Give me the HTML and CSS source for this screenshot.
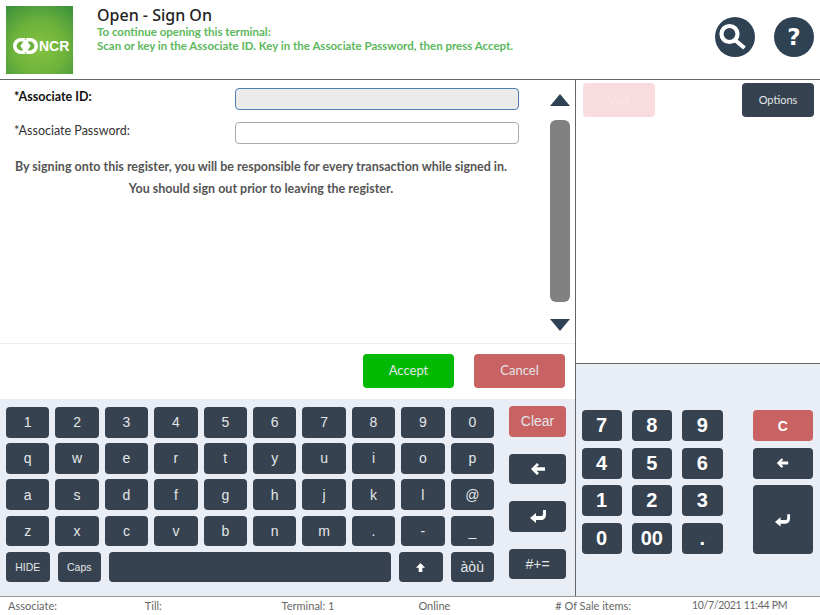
FILE: index.html
```html
<!DOCTYPE html>
<html lang="en">
  <head>
    <meta charset="UTF-8" />
    <title>Open - Sign On</title>
    <link rel="stylesheet" href="styles.css">
  </head>
  <body>
    <header class="top-bar">
      <div class="logo">
        <svg class="logo-mark" viewBox="0 0 25 16" width="25" height="16">
          <rect width="25" height="16" rx="8" fill="#fff" />
          <path d="M10.4 3.6 H8 A4.4 4.4 0 0 0 8 12.4 H10.4 L7.4 8 Z" fill="#6cb23c" />
          <path d="M14.6 3.6 H17 A4.4 4.4 0 0 1 17 12.4 H14.6 L17.6 8 Z" fill="#6cb23c" />
          <path d="M12.5 0 L13.6 1.6 L11.4 1.6 Z M12.5 16 L13.6 14.4 L11.4 14.4 Z" fill="#6cb23c" />
        </svg>
        <span>NCR</span>
      </div>
      <div class="heading">
        <h1>Open - Sign On</h1>
        <p>To continue opening this terminal:</p>
        <p>Scan or key in the Associate ID. Key in the Associate Password, then press Accept.</p>
      </div>
      <div class="round-button">
        <svg viewBox="0 0 40 40" width="40" height="40">
          <circle cx="14.5" cy="17" r="8" fill="none" stroke="#fff" stroke-width="4.2" />
          <path d="M20.5 23.5 L29.5 31" stroke="#fff" stroke-width="4.2" />
        </svg>
      </div>
      <div class="round-button help">?</div>
    </header>

    <div class="middle">
      <main class="left-side">
        <section class="form-pane">
          <form class="sign-on">
            <div class="field">
              <label class="strong">*Associate ID:</label>
              <input class="input-active" type="text" />
            </div>
            <div class="field">
              <label>*Associate Password:</label>
              <input type="text" />
            </div>
            <p class="notice">By signing onto this register, you will be responsible for every transaction while signed in.</p>
            <p class="notice">You should sign out prior to leaving the register.</p>
          </form>
          <div class="scroller">
            <div class="arrow-up"></div>
            <div class="thumb"></div>
            <div class="arrow-down"></div>
          </div>
        </section>

        <div class="actions">
          <button class="btn-accept">Accept</button>
          <button class="btn-cancel">Cancel</button>
        </div>

        <section class="keyboard">
          <div class="keys">
            <button>1</button><button>2</button><button>3</button><button>4</button><button>5</button>
            <button>6</button><button>7</button><button>8</button><button>9</button><button>0</button>
            <button>q</button><button>w</button><button>e</button><button>r</button><button>t</button>
            <button>y</button><button>u</button><button>i</button><button>o</button><button>p</button>
            <button>a</button><button>s</button><button>d</button><button>f</button><button>g</button>
            <button>h</button><button>j</button><button>k</button><button>l</button><button>@</button>
            <button>z</button><button>x</button><button>c</button><button>v</button><button>b</button>
            <button>n</button><button>m</button><button>.</button><button>-</button><button>_</button>
            <div class="bottom-row">
              <button class="small-key">HIDE</button>
              <button class="small-key">Caps</button>
              <button class="space-key"></button>
              <button class="small-key">
                <svg viewBox="0 0 12 12" width="11" height="11"><path d="M6 1 L11 6.2 H8 V11 H4 V6.2 H1 Z" fill="#fff" /></svg>
              </button>
              <button class="small-key accents">àòù</button>
            </div>
          </div>
          <div class="key-side">
            <button class="key-clear">Clear</button>
            <button>
              <svg viewBox="0 0 16 14" width="16" height="14"><path d="M7 1 L1 7 L7 13 L9 11 L6.4 8.8 H15 V5.2 H6.4 L9 3 Z" fill="#fff" /></svg>
            </button>
            <button>
              <svg viewBox="0 0 18 14" width="18" height="14"><path d="M1 9 L7 4 V7 H12.5 C13.5 7 14 6 14 4 V1 L17 1 V5 C17 9 15 11 12 11 H7 V14 Z" fill="#fff" /></svg>
            </button>
            <button>#+=</button>
          </div>
        </section>
      </main>

      <aside class="right-side">
        <div class="right-top">
          <button class="btn-disabled">Void</button>
          <button class="btn-options">Options</button>
        </div>
        <div class="numpad">
          <button>7</button><button>8</button><button>9</button>
          <button class="pad-c">C</button>
          <button>4</button><button>5</button><button>6</button>
          <button class="pad-side">
            <svg viewBox="0 0 16 14" width="13" height="12"><path d="M7 1 L1 7 L7 13 L9 11 L6.4 8.8 H15 V5.2 H6.4 L9 3 Z" fill="#fff" /></svg>
          </button>
          <button>1</button><button>2</button><button>3</button>
          <button class="pad-enter">
            <svg viewBox="0 0 18 14" width="17" height="14"><path d="M1 9 L7 4 V7 H12.5 C13.5 7 14 6 14 4 V1 L17 1 V5 C17 9 15 11 12 11 H7 V14 Z" fill="#fff" /></svg>
          </button>
          <button>0</button><button>00</button><button>.</button>
        </div>
      </aside>
    </div>

    <footer class="status-bar">
      <span>Associate:</span>
      <span>Till:</span>
      <span>Terminal: 1</span>
      <span>Online</span>
      <span># Of Sale items:</span>
      <span class="status-date">10/7/2021 11:44 PM</span>
    </footer>
  </body>
</html>
```

FILE: styles.css
```css
* {
  margin: 0;
  padding: 0;
  box-sizing: border-box;
}

body {
  width: 820px;
  height: 615px;
  overflow: hidden;
  display: flex;
  flex-direction: column;
  background-color: #fff;
  color: #555;
  font-family: Lato, sans-serif;
}

button {
  border: none;
  border-radius: 4px;
  background-color: #36424f;
  color: #e3e6e9;
  font-family: "Liberation Sans", sans-serif;
  display: flex;
  align-items: center;
  justify-content: center;
}

/* header */
.top-bar {
  height: 80px;
  flex: none;
  display: flex;
  align-items: flex-start;
  padding: 6px 6px 0;
  border-bottom: 1px solid #666;
}

.logo {
  width: 67px;
  height: 68px;
  flex: none;
  display: flex;
  align-items: center;
  justify-content: flex-start;
  gap: 1px;
  padding: 11px 0 0 7px;
  background: radial-gradient(circle at 50% 62%, #86c340 0%, #6cb23c 50%, #3a8f3c 100%);
  color: #fff;
  font-family: "Liberation Sans", sans-serif;
  font-size: 14px;
  font-weight: bold;
}

.heading {
  margin-left: 24px;
  flex: 1;
  color: #5cb85c;
  font-size: 11.5px;
  line-height: 14px;
  font-weight: 700;
}

.heading h1 {
  color: #222;
  font-family: "Noto Sans", sans-serif;
  font-size: 16px;
  line-height: 20px;
  font-weight: 500;
  margin-top: -1px;
}

.round-button {
  width: 40px;
  height: 40px;
  margin: 11px 0 0 19px;
  border-radius: 50%;
  background-color: #2f4254;
  color: #fff;
  display: flex;
  align-items: center;
  justify-content: center;
}

.help {
  font-family: "DejaVu Sans", sans-serif;
  font-size: 23px;
  font-weight: bold;
}

.middle {
  flex: 1;
  display: flex;
  min-height: 0;
}

/* left side */
.left-side {
  width: 576px;
  flex: none;
  display: flex;
  flex-direction: column;
  border-right: 1px solid #666;
}

.form-pane {
  height: 264px;
  flex: none;
  display: flex;
  border-bottom: 1px solid #eee;
}

.sign-on {
  width: 522px;
  flex: none;
  padding-top: 8px;
  font-size: 12.5px;
}

.field {
  display: flex;
  padding-left: 14px;
  margin-bottom: 12px;
}

.field label {
  width: 221px;
  flex: none;
  line-height: 18px;
  color: #333;
}

.field .strong {
  color: #111;
  font-weight: 700;
}

.field input {
  width: 284px;
  height: 22px;
  border: 1px solid #aaa;
  border-radius: 4px;
  background-color: #fff;
}

.field .input-active {
  background-color: #ebebeb;
  border-color: #4f7fb0;
}

.notice {
  text-align: center;
  font-weight: 700;
  line-height: 22px;
  color: #555;
  white-space: nowrap;
}

.field + .notice {
  margin-top: 1px;
}

.scroller {
  margin-left: 28px;
  width: 20px;
  padding-top: 14px;
  display: flex;
  flex-direction: column;
}

.arrow-up,
.arrow-down {
  width: 0;
  height: 0;
  border-left: 10px solid transparent;
  border-right: 10px solid transparent;
}

.arrow-up {
  border-bottom: 12px solid #2f4254;
}

.arrow-down {
  border-top: 12px solid #2f4254;
}

.thumb {
  height: 182px;
  margin: 14px 0 17px;
  border-radius: 6px;
  background-color: #808080;
}

.actions {
  height: 55px;
  flex: none;
  display: flex;
  justify-content: flex-end;
  gap: 20px;
  padding: 10px 10px 0 0;
}

.actions button {
  width: 91px;
  height: 34px;
  padding-bottom: 2px;
  font-family: Lato, sans-serif;
  font-size: 13px;
}

.btn-accept {
  background-color: #00b900;
}

.btn-cancel {
  background-color: #c96363;
}

/* keyboard */
.keyboard {
  flex: 1;
  display: flex;
  background-color: #e9edf5;
  padding: 8px 9px 0 6px;
  justify-content: space-between;
}

.keys {
  width: 488px;
  display: grid;
  grid-template-columns: repeat(10, 1fr);
  grid-auto-rows: 30.5px;
  column-gap: 6px;
  row-gap: 5.7px;
}

.keys button {
  font-size: 14px;
}

.bottom-row {
  grid-column: 1 / -1;
  display: flex;
  gap: 8px;
}

.keys .small-key {
  width: 43.5px;
  flex: none;
  font-size: 10.5px;
}

.keys .accents {
  font-size: 14px;
}

.space-key {
  flex: 1;
}

.key-side {
  width: 57px;
  height: 173px;
  display: flex;
  flex-direction: column;
  justify-content: space-between;
  margin-top: -1px;
}

.key-side button {
  height: 30.5px;
  font-size: 14px;
}

.key-side .key-clear {
  background-color: #c96363;
}

/* right side */
.right-side {
  flex: 1;
  display: flex;
  flex-direction: column;
}

.right-top {
  height: 284px;
  flex: none;
  display: flex;
  justify-content: space-between;
  align-items: flex-start;
  padding: 3px 6px 0 7px;
  border-bottom: 1px solid #666;
}

.right-top button {
  width: 72px;
  height: 33.5px;
  font-family: Lato, sans-serif;
  font-size: 11px;
}

.right-top .btn-disabled {
  background-color: #f9dcdd;
  color: #fbe6e7;
}

.numpad {
  flex: 1;
  display: grid;
  grid-template-columns: 40px 40px 40.5px 60px;
  grid-auto-rows: 31px;
  column-gap: 10.3px;
  row-gap: 6.7px;
  padding: 46px 0 0 5.5px;
  background-color: #e9edf5;
}

.numpad button {
  font-size: 20px;
  font-weight: bold;
  color: #fff;
}

.numpad .pad-c {
  margin-left: 20px;
  width: 60px;
  background-color: #c96363;
  font-size: 14px;
}

.numpad .pad-side,
.numpad .pad-enter {
  margin-left: 20px;
  width: 60px;
}

.numpad .pad-enter {
  grid-row: span 2;
}

/* footer */
.status-bar {
  height: 19px;
  flex: none;
  display: grid;
  grid-template-columns: repeat(6, 136.8px);
  padding-left: 8px;
  border-top: 1px solid #999;
  font-size: 11px;
  line-height: 17px;
  color: #666;
  white-space: nowrap;
}

.status-date {
  font-size: 10.5px;
  letter-spacing: -0.3px;
}
```
